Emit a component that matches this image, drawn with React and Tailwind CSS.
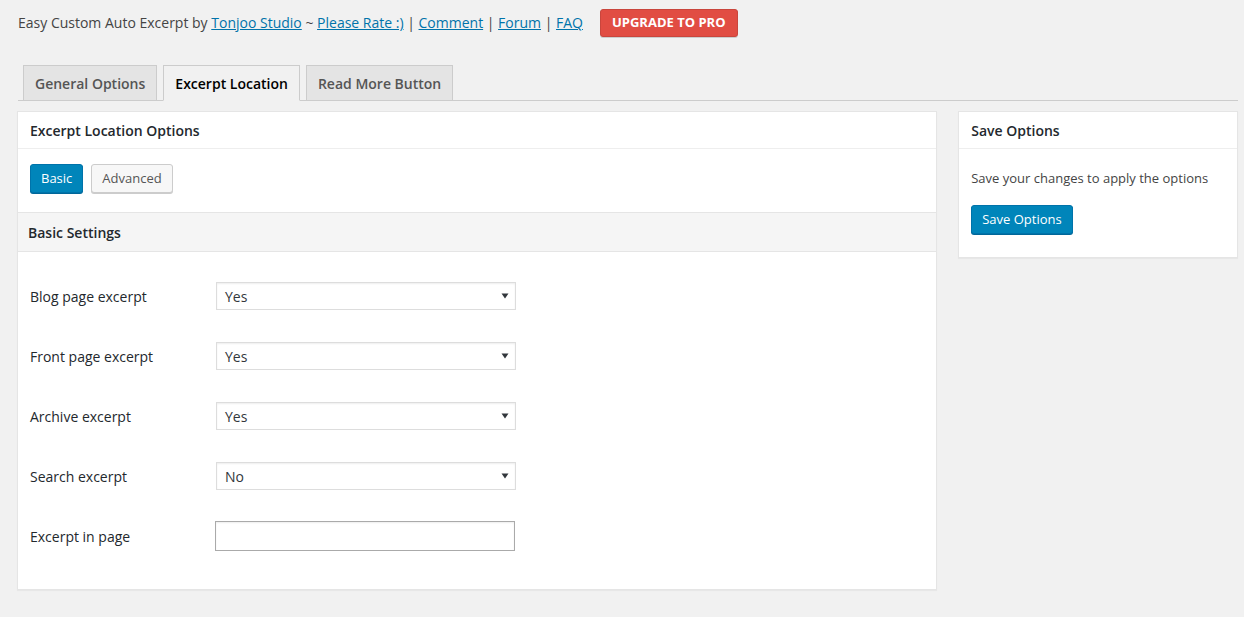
import React from 'react';

const font = { fontFamily: '"Open Sans", "Noto Sans", sans-serif' };

function Caret() {
  return (
    <svg width="8" height="6" viewBox="0 0 8 6" className="shrink-0">
      <path d="M0.5 0.5 L7.5 0.5 L4 5.5 Z" fill="#32373c" />
    </svg>
  );
}

function SelectBox({ value }) {
  return (
    <div className="w-[300px] h-[28px] flex items-center justify-between pl-[8px] pr-[6px] bg-white border border-[#ddd] shadow-[inset_0_1px_2px_rgba(0,0,0,0.07)] text-[14px] text-[#32373c]">
      <span>{value}</span>
      <Caret />
    </div>
  );
}

function Row({ label, children }) {
  return (
    <div className="h-[60px] flex items-center">
      <div className="w-[198px] shrink-0 pl-[12px] text-[14px] text-[#23282d]">{label}</div>
      {children}
    </div>
  );
}

export default function App() {
  const tabs = [
    { name: 'General Options', active: false },
    { name: 'Excerpt Location', active: true },
    { name: 'Read More Button', active: false },
  ];

  return (
    <div style={font} className="min-h-[617px] w-full bg-[#f1f1f1] pl-[17px] pr-[6px] pt-[8px] text-[#444]">
      {/* Header line */}
      <div className="flex items-center h-[29px] pl-[1px] text-[14px]">
        <span>Easy Custom Auto Excerpt by&nbsp;</span>
        <a className="text-[#0073aa] underline">Tonjoo Studio</a>
        <span>&nbsp;~&nbsp;</span>
        <a className="text-[#0073aa] underline">Please Rate :)</a>
        <span>&nbsp;|&nbsp;</span>
        <a className="text-[#0073aa] underline">Comment</a>
        <span>&nbsp;|&nbsp;</span>
        <a className="text-[#0073aa] underline">Forum</a>
        <span>&nbsp;|&nbsp;</span>
        <a className="text-[#0073aa] underline">FAQ</a>
        <span className="ml-[17px] h-[28px] px-[11px] flex items-center bg-[#e14d43] border border-[#c9463d] rounded-[3px] text-white text-[13px] font-bold shadow-[0_1px_0_rgba(0,0,0,0.15)]">
          UPGRADE TO PRO
        </span>
      </div>

      {/* Tabs */}
      <div className="mt-[28px] ml-[1px] flex items-end gap-[6px] border-b border-[#ccc] pl-[5px] h-[36px]">
        {tabs.map((t) => (
          <div
            key={t.name}
            className={
              t.active
                ? 'h-[36px] -mb-px px-[11px] flex items-center border border-[#ccc] border-b-[#f1f1f1] bg-[#f1f1f1] text-[14px] font-semibold text-black'
                : 'h-[35px] px-[11px] flex items-center border border-[#ccc] border-b-0 bg-[#e4e4e4] text-[14px] font-semibold text-[#555]'
            }
          >
            {t.name}
          </div>
        ))}
      </div>

      {/* Content */}
      <div className="mt-[10px] flex items-start gap-[21px]">
        {/* Main panel */}
        <div className="w-[921px] bg-white border border-[#e5e5e5] shadow-[0_1px_1px_rgba(0,0,0,0.04)]">
          <div className="h-[37px] flex items-center px-[12px] border-b border-[#eee] text-[14px] font-semibold text-[#23282d]">
            Excerpt Location Options
          </div>
          <div className="pt-[15px] pb-[19px] px-[12px] flex gap-[8px]">
            <span className="h-[29px] px-[10px] flex items-center bg-[#0085ba] border border-[#0073aa] rounded-[3px] text-white text-[13px] shadow-[0_1px_0_#006799]">
              Basic
            </span>
            <span className="h-[29px] px-[10px] flex items-center bg-[#f7f7f7] border border-[#ccc] rounded-[3px] text-[#555] text-[13px] shadow-[0_1px_0_#ccc]">
              Advanced
            </span>
          </div>
          <div className="h-[40px] flex items-center px-[10px] bg-[#f5f5f5] border-y border-[#e5e5e5] text-[14px] font-semibold text-[#23282d]">
            Basic Settings
          </div>
          <div className="pt-[14px] pb-[23px]">
            <Row label="Blog page excerpt"><SelectBox value="Yes" /></Row>
            <Row label="Front page excerpt"><SelectBox value="Yes" /></Row>
            <Row label="Archive excerpt"><SelectBox value="Yes" /></Row>
            <Row label="Search excerpt"><SelectBox value="No" /></Row>
            <Row label="Excerpt in page">
              <div className="-ml-px w-[300px] h-[30px] bg-white border border-[#aaa] shadow-[inset_0_1px_2px_rgba(0,0,0,0.07)]" />
            </Row>
          </div>
        </div>

        {/* Sidebar */}
        <div className="w-[280px] bg-white border border-[#e5e5e5] shadow-[0_1px_1px_rgba(0,0,0,0.04)]">
          <div className="h-[37px] flex items-center px-[12px] border-b border-[#eee] text-[14px] font-semibold text-[#23282d]">
            Save Options
          </div>
          <div className="px-[12px] pt-[20px] pb-[23px]">
            <div className="text-[13px] text-[#444] leading-[18px]">Save your changes to apply the options</div>
            <span className="mt-[18px] inline-flex h-[29px] px-[10px] items-center bg-[#0085ba] border border-[#0073aa] rounded-[3px] text-white text-[13px] shadow-[0_1px_0_#006799]">
              Save Options
            </span>
          </div>
        </div>
      </div>
    </div>
  );
}
